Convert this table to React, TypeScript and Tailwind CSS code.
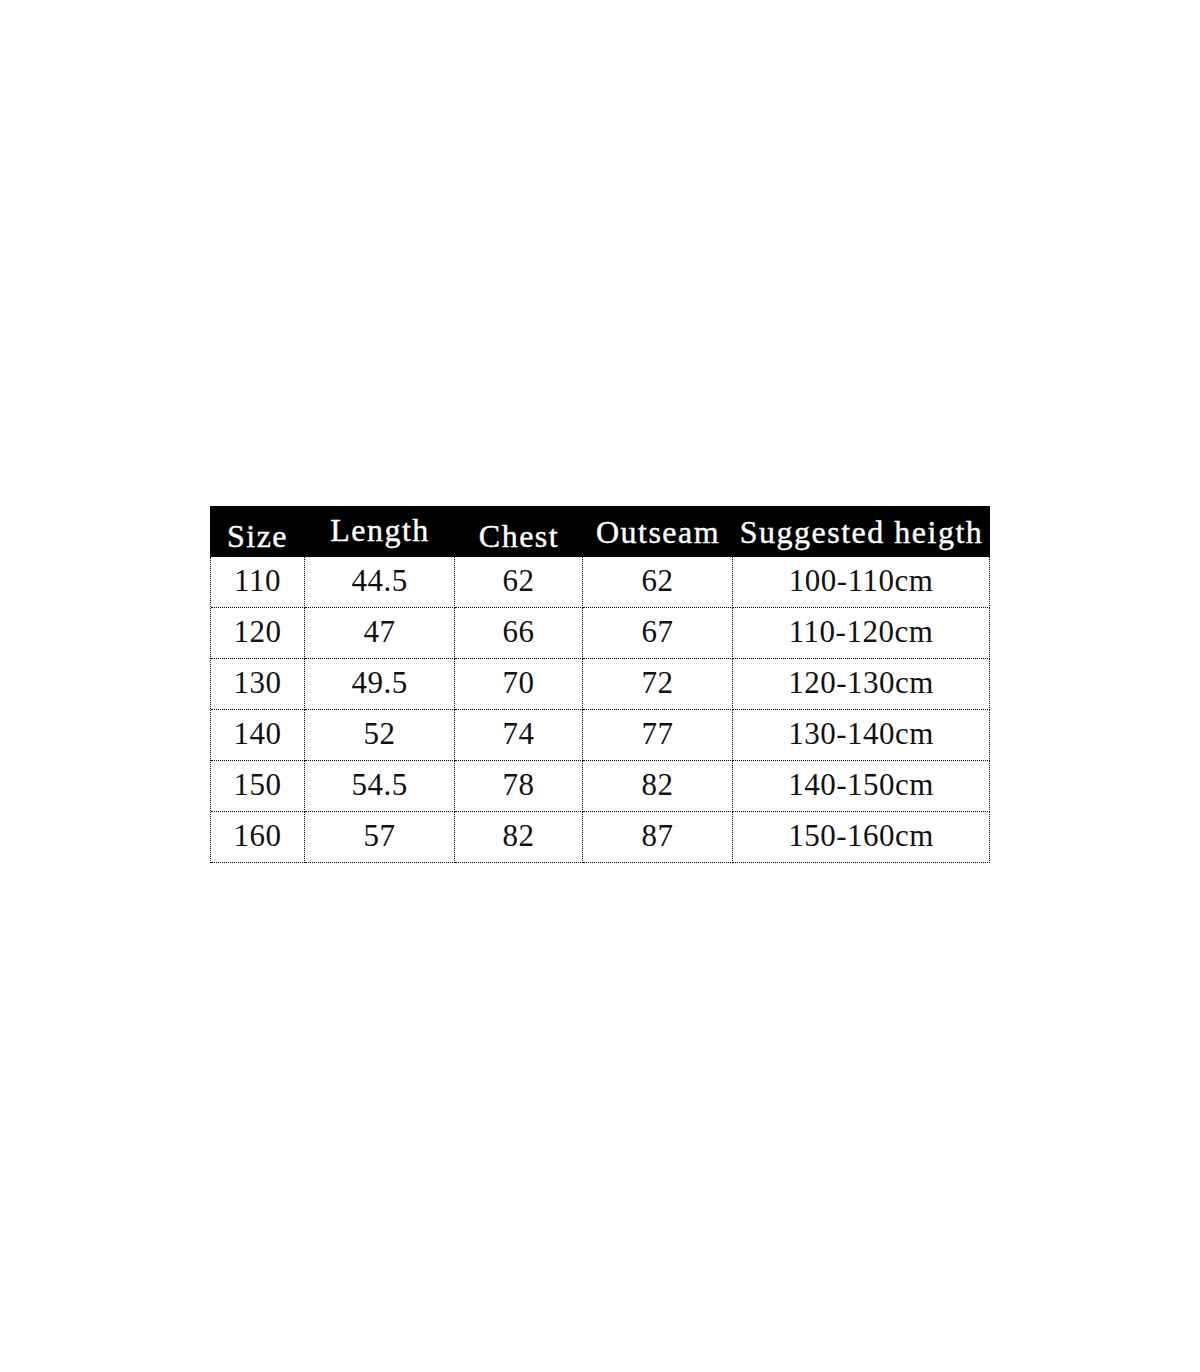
const headers = [
  { label: "Size", cls: "pb-[4px]" },
  { label: "Length", cls: "pb-[15px]" },
  { label: "Chest", cls: "pb-[4px]" },
  { label: "Outseam", cls: "pb-[12px]" },
  { label: "Suggested heigth", cls: "pb-[12px]" },
];

const rows = [
  ["110", "44.5", "62", "62", "100-110cm"],
  ["120", "47", "66", "67", "110-120cm"],
  ["130", "49.5", "70", "72", "120-130cm"],
  ["140", "52", "74", "77", "130-140cm"],
  ["150", "54.5", "78", "82", "140-150cm"],
  ["160", "57", "82", "87", "150-160cm"],
];

export default function App() {
  return (
    <div
      className="min-h-[1372px] bg-white flex justify-center pt-[506px]"
      style={{ fontFamily: '"Liberation Serif", "Times New Roman", serif' }}
    >
      <div className="w-[780px]">
        <div className="grid grid-cols-[95px_150px_128px_150px_257px] bg-black text-white h-[51px]">
          {headers.map((h) => (
            <div
              key={h.label}
              className={`flex items-center justify-center text-[32px] tracking-[1.5px] whitespace-nowrap ${h.cls}`}
              style={{ WebkitTextStroke: "0.4px white" }}
            >
              {h.label}
            </div>
          ))}
        </div>
        <div className="border-l border-dotted border-black">
          {rows.map((r, i) => (
            <div key={i} className="grid grid-cols-[94px_150px_128px_150px_257px]">
              {r.map((c, j) => (
                <div
                  key={j}
                  className="h-[51px] flex items-center justify-center pb-[2px] border-r border-b border-dotted border-black text-[31px] tracking-[0.5px] text-[#111]"
                >
                  {c}
                </div>
              ))}
            </div>
          ))}
        </div>
      </div>
    </div>
  );
}
